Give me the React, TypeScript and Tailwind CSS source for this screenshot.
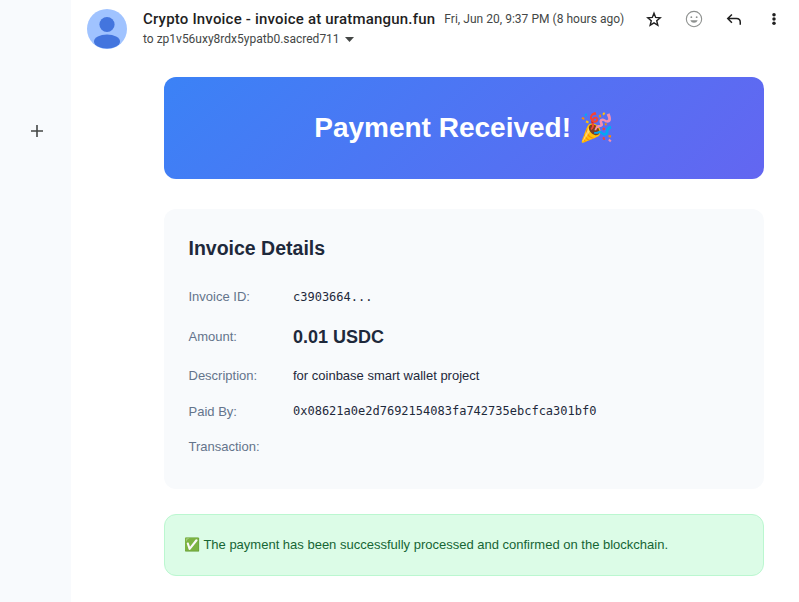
import React from "react";

function Row({ label, children, className }: { label: string; children?: React.ReactNode; className?: string }) {
  return (
    <div className={`flex items-center ${className ?? ""}`}>
      <div className="w-[104.5px] shrink-0 text-[13px] leading-[20px] text-[#64748b]">{label}</div>
      {children}
    </div>
  );
}

export default function App() {
  return (
    <div className="flex h-[602px] w-[799px] overflow-hidden bg-white font-['Liberation_Sans',sans-serif]">
      <aside className="flex h-full w-[71px] shrink-0 justify-center bg-[#f8fafd] pl-[2px] pt-[124px]">
        <svg width="14" height="14" viewBox="0 0 14 14" className="text-[#444746]">
          <path d="M7 1v12M1 7h12" stroke="currentColor" strokeWidth="1.6" fill="none" />
        </svg>
      </aside>
      <main className="min-w-0 flex-1">
        <header className="flex h-[77px] items-start pl-4 pt-[9px]">
          <svg width="40" height="40" viewBox="0 0 40 40" className="shrink-0">
            <circle cx="20" cy="20" r="20" fill="#a0c3ff" />
            <circle cx="20" cy="15.5" r="7.6" fill="#4375de" />
            <ellipse cx="20" cy="32.5" rx="13" ry="7" fill="#4375de" />
          </svg>
          <div className="ml-4 min-w-0 flex-1 pt-[1px] font-['Roboto',sans-serif]">
            <div className="flex items-center whitespace-nowrap">
              <span className="text-[15px] font-medium leading-[18px] tracking-[0.19px] text-[#1f1f1f]">Crypto Invoice - invoice at uratmangun.fun</span>
              <span className="ml-[9px] text-[12px] leading-[18px] tracking-[0.03px] text-[#444746]">Fri, Jun 20, 9:37 PM (8 hours ago)</span>
            </div>
            <div className="mt-[2px] flex items-center text-[12px] leading-[18px] text-[#444746]">
              <span>to zp1v56uxy8rdx5ypatb0.sacred711</span>
              <svg width="9" height="5" viewBox="0 0 9 5" className="ml-[5px] mt-[1px]"><path d="M0 0h9L4.5 5z" fill="#444746" /></svg>
            </div>
          </div>
          <div className="mr-[5px] flex shrink-0 items-center">
            <span className="flex h-5 w-10 items-center justify-center">
              <svg width="20" height="20" viewBox="0 0 24 24" fill="none" stroke="#1f1f1f" strokeWidth="1.7">
                <path d="M12 5l2 5.1 5.5.5-4.2 3.6 1.3 5.4L12 16.7l-4.6 2.9 1.3-5.4-4.2-3.6 5.5-.5z" />
              </svg>
            </span>
            <span className="flex h-5 w-10 items-center justify-center">
              <svg width="20" height="20" viewBox="0 0 24 24" fill="none" stroke="#8e918f" strokeWidth="1.3">
                <circle cx="12" cy="12" r="9.2" />
                <circle cx="8.8" cy="9.8" r="1.1" fill="#8e918f" stroke="none" />
                <circle cx="15.2" cy="9.8" r="1.1" fill="#8e918f" stroke="none" />
                <path d="M7.6 13.6c.8 2 2.4 3 4.4 3s3.6-1 4.4-3z" fill="#8e918f" stroke="none" />
              </svg>
            </span>
            <span className="flex h-5 w-10 items-center justify-center">
              <svg width="20" height="20" viewBox="0 0 24 24" fill="none" stroke="#1f1f1f" strokeWidth="1.8">
                <path d="M9.5 6.5L4.5 11.5l5 5M4.5 11.5H15c2.8 0 4.5 2 4.5 4.5v3" />
              </svg>
            </span>
            <span className="flex h-5 w-10 items-center justify-center">
              <svg width="20" height="20" viewBox="0 0 24 24" fill="#1f1f1f">
                <circle cx="12" cy="6.8" r="2.1" /><circle cx="12" cy="12" r="2.1" /><circle cx="12" cy="17.2" r="2.1" />
              </svg>
            </span>
          </div>
        </header>
        <div className="ml-[93px] w-[600px]">
          <section className="flex h-[102px] items-center justify-center rounded-xl bg-[linear-gradient(135deg,#3b82f6,#6366f1)]">
            <h1 className="text-[28px] font-bold leading-[36px] text-white">Payment Received! 🎉</h1>
          </section>
          <section className="mt-[30px] h-[280px] rounded-xl bg-[#f8fafc] px-[24.5px] pt-[26px]">
            <h2 className="text-[19.5px] font-bold leading-[26px] text-[#1e293b]">Invoice Details</h2>
            <Row label="Invoice ID:" className="mt-[26px] h-[20px]">
              <span className="font-['DejaVu_Sans_Mono',monospace] text-[12px] text-[#1e293b]">c3903664...</span>
            </Row>
            <Row label="Amount:" className="mt-[20px] h-[20px]">
              <span className="text-[18px] font-bold text-[#1e293b]">0.01 USDC</span>
            </Row>
            <Row label="Description:" className="mt-[19px] h-[20px]">
              <span className="text-[13px] text-[#1e293b]">for coinbase smart wallet project</span>
            </Row>
            <Row label="Paid By:" className="mt-[16px] h-[20px]">
              <span className="-mt-[2px] font-['DejaVu_Sans_Mono',monospace] text-[12px] text-[#1e293b]">0x08621a0e2d7692154083fa742735ebcfca301bf0</span>
            </Row>
            <Row label="Transaction:" className="mt-[15px] h-[20px]" />
          </section>
          <section className="mt-[25px] flex h-[62px] items-center rounded-xl border border-[#bbf7d0] bg-[#dcfce7] pl-[19px] text-[13px] text-[#166534]">
            <span>✅ The payment has been successfully processed and confirmed on the blockchain.</span>
          </section>
        </div>
      </main>
    </div>
  );
}
